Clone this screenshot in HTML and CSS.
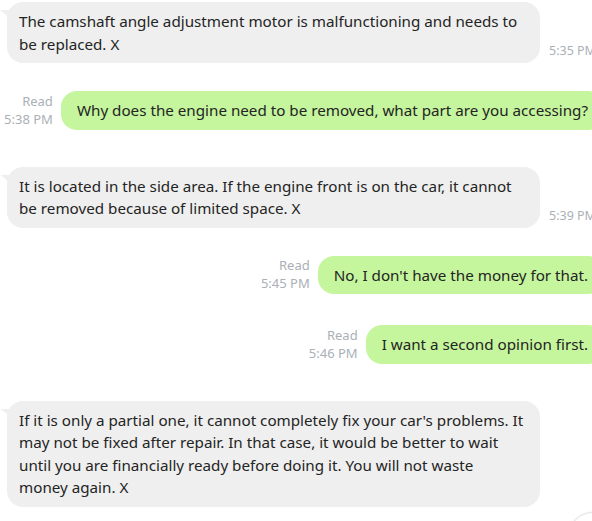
FILE: index.html
```html
<!DOCTYPE html>
<html lang="en">
<head>
<meta charset="utf-8">
<title>Chat</title>
<link rel="stylesheet" href="styles.css">
</head>
<body>
<div class="chat">
  <div class="row in">
    <div class="bubble grey">The camshaft angle adjustment motor is malfunctioning and needs to be replaced. X</div>
    <div class="time">5:35 PM</div>
  </div>
  <div class="row out">
    <div class="meta"><span>Read</span><span>5:38 PM</span></div>
    <div class="bubble green">Why does the engine need to be removed, what part are you accessing?</div>
  </div>
  <div class="row in">
    <div class="bubble grey">It is located in the side area. If the engine front is on the car, it cannot be removed because of limited space. X</div>
    <div class="time">5:39 PM</div>
  </div>
  <div class="row out">
    <div class="meta"><span>Read</span><span>5:45 PM</span></div>
    <div class="bubble green">No, I don't have the money for that.</div>
  </div>
  <div class="row out">
    <div class="meta"><span>Read</span><span>5:46 PM</span></div>
    <div class="bubble green">I want a second opinion first.</div>
  </div>
  <div class="row in">
    <div class="bubble grey">If it is only a partial one, it cannot completely fix your car's problems. It may not be fixed after repair. In that case, it would be better to wait until you are financially ready before doing it. You will not waste money again. X</div>
    <div class="time"></div>
  </div>
</div>
<div class="scroll-btn"></div>
</body>
</html>
```
FILE: styles.css
```css
html, body {
  margin: 0;
  padding: 0;
  background: #ffffff;
  overflow: hidden;
}
body {
  width: 592px;
  height: 521px;
  position: relative;
  font-family: "Noto Sans", "Open Sans", sans-serif;
  color: #242424;
}
.chat {
  width: 604px;
  padding-top: 2px;
  display: flex;
  flex-direction: column;
}
.row {
  display: flex;
  align-items: flex-end;
}
.row.in {
  padding-left: 7px;
}
.row.out {
  justify-content: flex-end;
}
.in + .out { margin-top: 28px; }
.out + .in { margin-top: 37px; }
.out + .out { margin-top: 31px; }

.bubble {
  font-size: 15.2px;
  line-height: 22.5px;
  padding: 8px 16px 8px 12px;
  border-radius: 16px;
  box-sizing: border-box;
}
.bubble.grey {
  background: #efefef;
  width: 533px;
  position: relative;
}
.bubble.grey::before {
  content: "";
  position: absolute;
  left: -7px;
  top: 8px;
  width: 11px;
  height: 9px;
  background: #efefef;
  clip-path: polygon(0 0, 100% 0, 100% 100%);
}
.bubble.green {
  background: #c5f59d;
  padding: 8px 16px;
  max-width: 548px;
}
.time {
  font-size: 12.5px;
  color: #aab0b6;
  margin-left: 9px;
  margin-bottom: 4px;
  white-space: nowrap;
}
.meta {
  display: flex;
  flex-direction: column;
  align-items: flex-end;
  font-size: 13px;
  line-height: 18px;
  color: #aab0b6;
  margin-right: 8px;
  margin-bottom: 2px;
  white-space: nowrap;
}
.scroll-btn {
  position: absolute;
  left: 568px;
  top: 512px;
  width: 48px;
  height: 48px;
  border-radius: 50%;
  border: 1px solid #e2e2e2;
  background: #ffffff;
  box-shadow: 0 0 3px rgba(0,0,0,0.08);
}
```
